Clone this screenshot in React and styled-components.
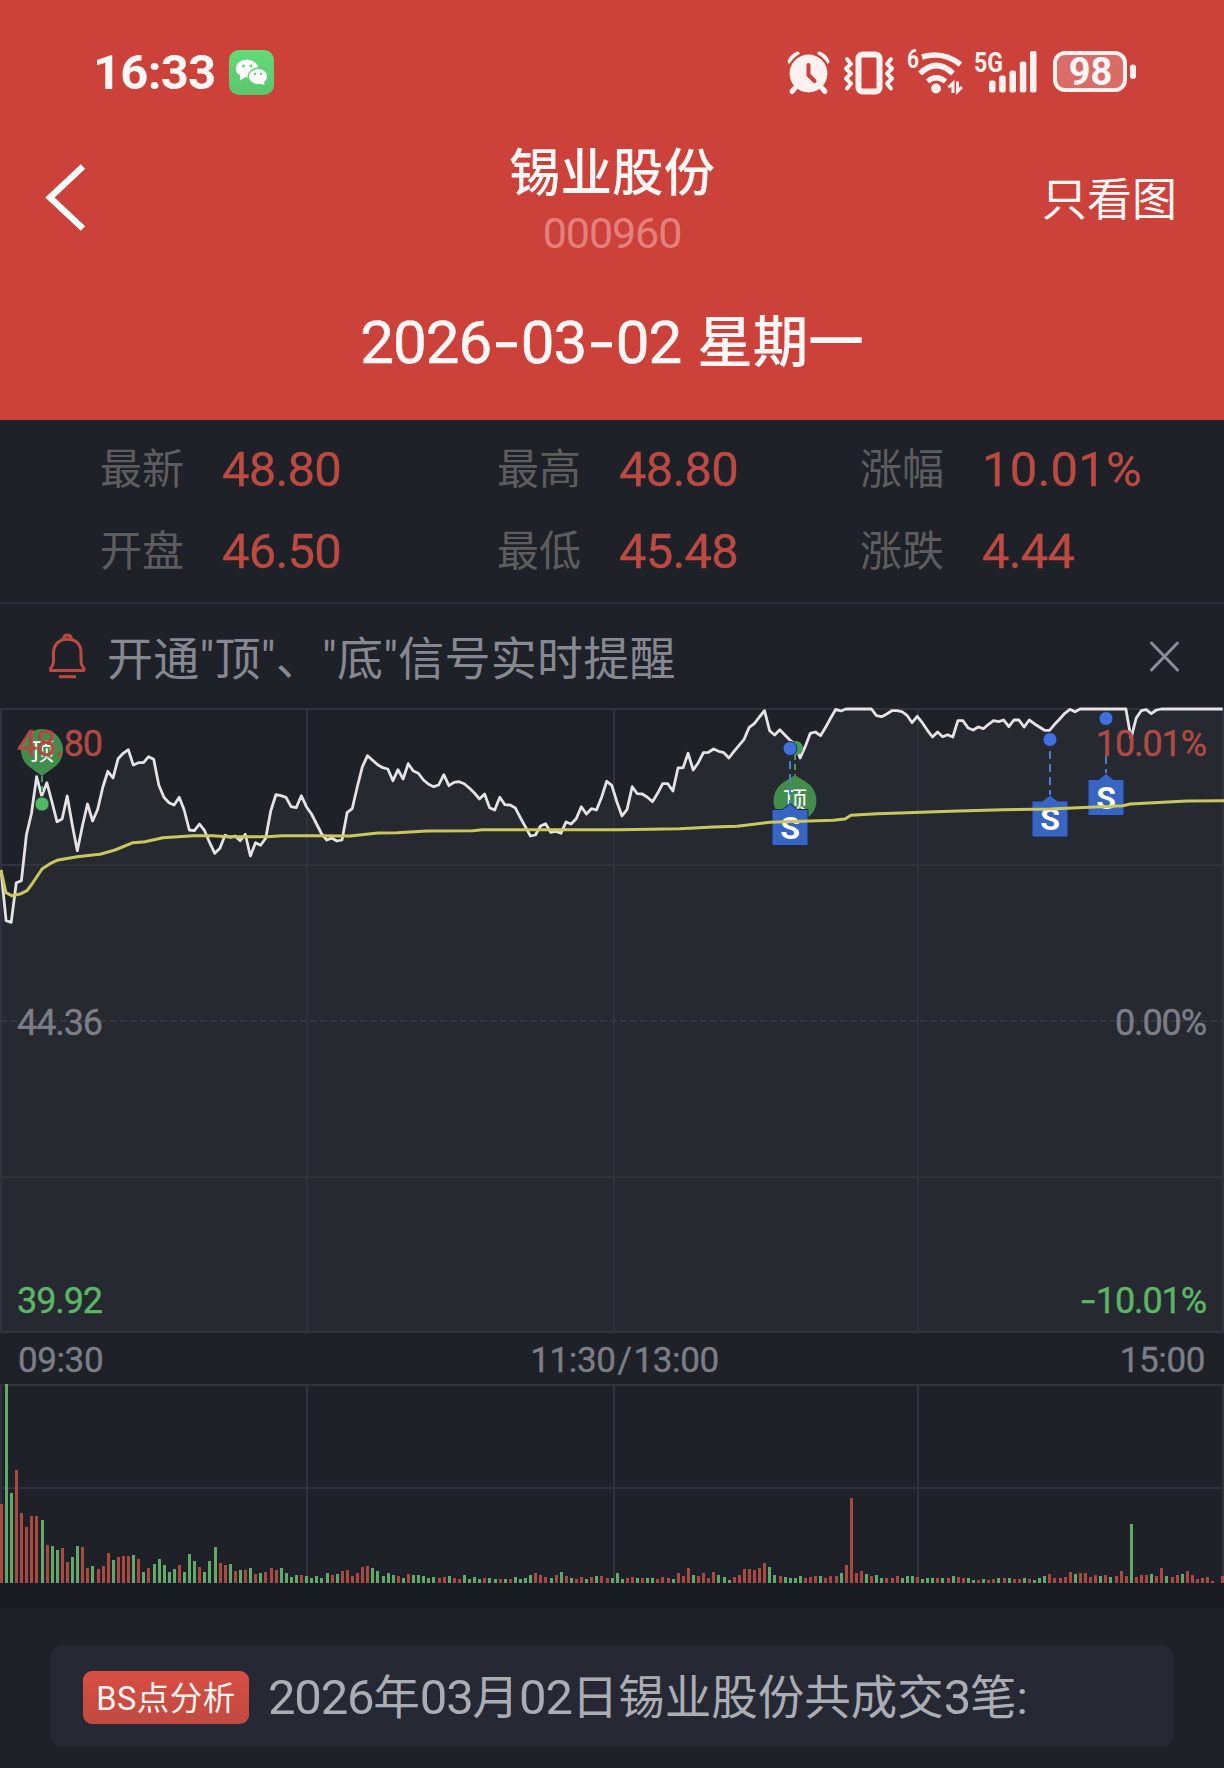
import React from 'react';
import styled, { createGlobalStyle } from 'styled-components';

const GlobalStyle = createGlobalStyle`
  * {
    box-sizing: border-box;
  }

  body {
    margin: 0;
    background: #1f2128;
    font-family: Roboto, "Noto Sans CJK SC", sans-serif;
  }

  svg {
    display: block;
    flex: none;
    overflow: visible;
  }
`;

const CHART_W = 1224;
const PRICE_H = 625;
const VOLUME_H = 199;
const STEP = 5.09;

const prices = [
  161, 211.7, 213.3, 173.7, 171.7, 126, 104.3, 67.7, 87, 73.7, 92.7, 112.7, 110, 87, 116,
  141.7, 117, 95, 112, 100.3, 78.3, 62.3, 69, 49.7, 44.3, 40.7, 56, 53.7, 53.7, 47.7,
  50.3, 76, 88.3, 93.7, 96, 88.3, 101, 121, 121.7, 115, 121.7, 133.7, 144.3, 139.3, 126.3,
  128.3, 127, 131.7, 125.3, 147, 133.7, 136.3, 129.3, 101.7, 85.7, 86.7, 88.3, 97.7, 98.7, 86.7,
  97.7, 105, 115, 125, 131, 129, 132, 131, 103.7, 99.7, 77.7, 57.7, 46.7, 51.3, 55.7,
  58.7, 60, 71.7, 60.7, 70, 54.7, 62, 64.3, 71, 75.3, 77.7, 76, 65.7, 76.7, 73.3,
  72.7, 74.7, 79, 84, 90, 85, 98.7, 101, 88.3, 95.7, 96, 98.7, 108.3, 117.7, 127,
  126, 117, 114.7, 123.3, 122.3, 124.3, 113, 115, 109.7, 97.7, 105, 99.7, 101, 88.3, 72.3,
  76.3, 93, 107, 100.3, 77.7, 84.7, 85, 88.3, 92.7, 84.3, 74.7, 74.7, 82, 59, 58.7,
  44.3, 61, 53.7, 43.7, 43.3, 40, 42.3, 43.7, 49, 42.3, 36.3, 30.3, 18.3, 14.7, 8,
  1.7, 21.7, 26, 20.7, 26, 31, 35, 49, 37.7, 24.3, 23, 26.7, 18.3, 9, 0.3,
  2, 0, 0, 0, 0, 0, 0, 6.7, 7.7, 5, 1.7, 1.7, 2.7, 6.3, 13.7,
  7.3, 13.7, 21.3, 28, 23, 27.7, 25.7, 28, 11.7, 11.7, 19, 21, 18, 19.7, 15.3,
  11.7, 12.7, 11, 17.7, 11, 11, 18, 11, 14.7, 18, 21.3, 21.3, 15.3, 10, 4.3,
  0.3, 2.7, 0, 0, 0, 0, 0, 0, 0, 0, 0, 0, 29.3, 9.3, 1.7,
  0.7, 4.7, 1, 0, 0, 0, 0, 0, 0, 0, 0, 0, 0, 0, 0, 0,
];

const average = [
  [1, 161], [6, 183.7], [11.7, 186.7], [21, 184.7], [27, 181.7], [32, 175], [42, 160],
  [50, 154.7], [57, 151.3], [77, 147.7], [100, 145.3], [115, 141], [133, 133.7], [145, 132.7],
  [163, 128.7], [193, 126.7], [213, 126.7], [227, 127.7], [267, 127.7], [282, 126.7],
  [310, 126.7], [350, 127], [378, 124], [397, 123.7], [427, 122], [473, 121.7], [482, 120.7],
  [620, 120.7], [680, 119.7], [713, 118], [737, 117.3], [770, 113.3], [833, 111.3],
  [845, 110], [851, 106.3], [877, 104.7], [900, 104], [950, 102.3], [1003, 100.7],
  [1050, 100], [1123, 96.7], [1130, 95], [1187, 92], [1224, 91.7],
];

// r = up minute, g = down minute, number = bar height
const volumes = `
  r79 g199 g90 r113 r70 r56 r67 r67 g63 r38 g37 g33 r35 r21 g26 g37 r36 r15 g17 r14
  r17 r30 g23 r26 r27 r27 g28 r24 g11 r15 g19 g24 g18 g11 g14 r18 g11 g29 g22 r16
  g11 g22 g36 r20 r18 g19 r12 g13 r13 g15 r9 g10 r11 r15 r13 g15 g10 g6 g8 r8
  g7 g5 g7 g5 g10 r8 g9 r12 r13 r7 r10 r16 r17 g15 g12 g7 g10 g8 r7 g5
  r9 g8 g8 g7 g5 g6 r5 r6 g7 r5 r4 g8 g4 g6 g4 r5 g5 g4 r4 g4
  r4 g6 g4 g5 g8 r10 r8 r6 g5 r8 g11 r7 g5 r4 r6 g4 r6 g7 r7 r5
  g5 g10 g4 r5 r6 g5 r5 g5 g5 r4 r6 r5 g4 r10 r7 r15 g8 r7 r10 r5
  r11 g8 g6 g3 r6 r8 r14 r14 r13 r15 r20 g16 g8 r7 g6 g5 g5 g7 r5 r6
  r7 g7 r5 r7 r7 g10 r18 r85 r10 r12 g9 r7 g8 g5 r5 r5 r7 g5 g7 g7
  r6 g4 g5 g5 r5 g5 r5 g7 r6 r5 g5 g3 r3 g4 r3 r4 g5 r5 g5 r4
  r4 g5 r4 g3 g5 g7 r9 r5 r5 r6 r11 g9 r10 r10 r6 r8 g7 r8 g6 r7
  r12 r7 g59 r6 r8 r8 g9 r7 r15 g7 r6 r8 g9 r12 r8 r4 r5 r6 r2 r0 r7
`.trim().split(/\s+/).map((v) => ({ up: v[0] === 'r', h: Number(v.slice(1)) }));

const stats = [
  [{ label: '最新', value: '48.80' }, { label: '开盘', value: '46.50' }],
  [{ label: '最高', value: '48.80' }, { label: '最低', value: '45.48' }],
  [{ label: '涨幅', value: '10.01%', wide: true }, { label: '涨跌', value: '4.44' }],
];

const Screen = styled.div`
  width: 1224px;
  height: 1768px;
  overflow: hidden;
  display: flex;
  flex-direction: column;
  background: #1f2128;
`;

const Header = styled.header`
  height: 420px;
  flex: none;
  display: flex;
  flex-direction: column;
  background: #cc4139;
  color: #fff6f5;
`;

const StatusBar = styled.div`
  height: 96px;
  padding: 49px 88px 0 93px;
  display: flex;
  justify-content: space-between;
`;

const StatusGroup = styled.div`
  display: flex;
  align-items: center;
  height: 47px;
  gap: 14px;
`;

const Clock = styled.span`
  width: 122px;
  font-size: 49px;
  font-weight: 700;
  line-height: 47px;
  letter-spacing: -0.8px;
  white-space: nowrap;
`;

const NavBar = styled.div`
  height: 204px;
  padding: 6px 47px 0 47px;
  display: grid;
  grid-template-columns: 200px 1fr 200px;
  align-items: center;
`;

const BackButton = styled.div`
  margin: 0 0 8px -4px;
`;

const Title = styled.h1`
  margin: 0;
  font-size: 51.5px;
  font-weight: 500;
  line-height: 60px;
  text-align: center;
`;

const Code = styled.div`
  margin-top: 4px;
  font-size: 43px;
  line-height: 50px;
  letter-spacing: -1.1px;
  text-align: center;
  color: #e5817c;
`;

const ChartOnly = styled.div`
  font-size: 45px;
  line-height: 60px;
  text-align: right;
`;

const DateRow = styled.div`
  height: 84px;
  padding-top: 2px;
  display: flex;
  justify-content: center;
  align-items: center;
  gap: 16px;
`;

const DateDigits = styled.span`
  font-size: 60px;
  line-height: 84px;
  letter-spacing: -1px;
  -webkit-text-stroke: 0.6px currentColor;
`;

const Weekday = styled.span`
  padding-top: 2px;
  font-size: 55.5px;
  font-weight: 500;
  line-height: 84px;
`;

const Dash = styled.span`
  display: inline-block;
  margin: 0 ${(props) => props.$gap}px;
  transform: scaleX(1.4);
`;

const Stats = styled.section`
  height: 184px;
  flex: none;
  padding: 9px 0 0 100px;
  display: grid;
  grid-template-columns: 397px 363px 1fr;
  border-bottom: 2px solid #2b2e37;
`;

const StatRow = styled.div`
  height: 82px;
  display: flex;
  align-items: center;
  line-height: 70px;
`;

const StatLabel = styled.span`
  width: 122px;
  font-size: 42px;
  color: #5d5d5f;
`;

const StatValue = styled.span`
  font-size: 49px;
  letter-spacing: ${(props) => (props.$wide ? 0.2 : -0.8)}px;
  color: #bd4a42;
  -webkit-text-stroke: 0.3px currentColor;
`;

const Notice = styled.div`
  height: 104px;
  flex: none;
  padding: 0 44px 0 48px;
  display: flex;
  align-items: center;
`;

const NoticeText = styled.span`
  flex: 1;
  margin-left: 20px;
  padding-top: 6px;
  font-size: 46px;
  line-height: 60px;
  letter-spacing: 0.25px;
  color: #868892;
`;

const PriceChart = styled.section`
  position: relative;
  height: ${PRICE_H}px;
  flex: none;
`;

const Overlay = styled.div`
  position: absolute;
  inset: 0;
`;

const AxisLabels = styled(Overlay)`
  padding: 16px 18px 12px 17px;
  display: flex;
  flex-direction: column;
  justify-content: space-between;
`;

const AxisRow = styled.div`
  display: flex;
  justify-content: space-between;
  font-size: 36px;
  line-height: 40px;
  letter-spacing: -1.1px;
  color: ${(props) => props.$color};
  -webkit-text-stroke: 0.4px currentColor;
`;

const TimeAxis = styled.div`
  height: 51px;
  flex: none;
  padding: 3px 19px 0 18px;
  display: grid;
  grid-template-columns: 1fr auto 1fr;
  align-items: center;
  font-size: 35px;
  letter-spacing: -0.4px;
  color: #7c7e87;
  -webkit-text-stroke: 0.4px currentColor;

  span:nth-child(2) {
    margin-left: 26px;
  }

  span:last-child {
    text-align: right;
  }
`;

const Slash = styled.i`
  margin: 0 2px;
  font-style: normal;
`;

const VolumeChart = styled.section`
  height: ${VOLUME_H}px;
  flex: none;
`;

const Spacer = styled.div`
  height: 25px;
  flex: none;
  background: #191b23;
`;

const AnalysisCard = styled.section`
  height: 102px;
  margin: 37px 50px 0;
  padding: 2px 33px 0;
  display: flex;
  align-items: center;
  gap: 19px;
  border-radius: 13px;
  background: #262934;
`;

const Badge = styled.span`
  width: 166px;
  height: 53px;
  padding-top: 2px;
  border-radius: 9px;
  background: linear-gradient(180deg, #d94d43, #c04a41);
  color: #fff3f1;
  font-size: 32.5px;
  line-height: 53px;
  letter-spacing: 0.5px;
  text-align: center;
  white-space: nowrap;
`;

const AnalysisText = styled.span`
  padding-top: 2px;
  font-size: 46.5px;
  line-height: 60px;
  color: #abadb4;
  white-space: nowrap;
`;

const Num = styled.span`
  font-size: 49px;
  letter-spacing: -1.2px;
`;

const WeChatIcon = () => (
  <svg width="45" height="45" viewBox="0 0 45 45">
    <defs>
      <linearGradient id="wechat" x1="0" y1="0" x2="0" y2="1">
        <stop offset="0" stopColor="#64db78" />
        <stop offset="1" stopColor="#5bc56c" />
      </linearGradient>
    </defs>
    <rect width="45" height="45" rx="10" fill="url(#wechat)" />
    <g fill="#fff">
      <ellipse cx="18" cy="18.5" rx="11.2" ry="9" />
      <path d="M11 25v5.4l5.5-3.4z" />
      <ellipse cx="29" cy="26.5" rx="9.8" ry="8.2" stroke="#60cf72" strokeWidth="1.4" />
      <path d="M31 33.5l4.5 1.8-.6-4z" />
    </g>
    <g fill="#60cf72">
      <circle cx="14.5" cy="16" r="1.4" />
      <circle cx="22" cy="16" r="1.4" />
      <circle cx="26" cy="24" r="1.2" />
      <circle cx="32" cy="24" r="1.2" />
    </g>
  </svg>
);

const AlarmIcon = () => (
  <svg width="42" height="43" fill="none" stroke="#fff1f0" strokeLinecap="round">
    <circle cx="20.5" cy="22.5" r="19" fill="#fff1f0" stroke="none" />
    <path d="M1.8 10.5Q4 5 9.500 2.800M39.200 10.500Q37 5 31.500 2.800" strokeWidth="4.500" />
    <circle cx="20.500" cy="22.500" r="20.300" stroke="#cc4139" strokeWidth="1.800" />
    <path d="M7 37l-3 3.500M34 37l3 3.500" strokeWidth="5" />
    <path d="M20.500 14v10l6 6" stroke="#cc4139" strokeWidth="4" strokeLinejoin="round" />
  </svg>
);

const VibrateIcon = () => (
  <svg width="49" height="43" fill="none" stroke="#fff1f0" strokeLinecap="round" strokeLinejoin="round">
    <rect x="14.500" y="3.500" width="21" height="37" rx="4" strokeWidth="6" />
    <path d="M3 8l4 5-5 4.500 5 5-5 5 5 5-4 5" strokeWidth="4" />
    <path d="M47 8l-4 5 5 4.500-5 5 5 5-5 5 4 5" strokeWidth="4" />
  </svg>
);

const WifiIcon = () => (
  <svg width="53" height="46" fill="none" stroke="#fff1f0">
    <path d="M15 7Q36 .500 53.500 14.500" strokeWidth="5.500" />
    <path d="M13 23.500Q29.500 7.500 46 23.500" strokeWidth="5.500" />
    <path d="M20.500 31.500Q29.500 24 38.500 31.500" strokeWidth="5.500" />
    <circle cx="29" cy="38.500" r="4.900" fill="#fff1f0" stroke="none" />
    <path d="M46 43V33l-4.500 4.500M50.500 31.500v10l4.500-4.500" strokeWidth="3" />
    <text x="0" y="18" fontSize="25" fontWeight="700" fill="#fff1f0" stroke="none" textLength="12" lengthAdjust="spacingAndGlyphs">6</text>
  </svg>
);

const SignalIcon = () => (
  <svg width="65" height="43" fill="#fff1f0">
    <text x="0" y="21" fontSize="28.500" fontWeight="700" textLength="29" lengthAdjust="spacingAndGlyphs">5G</text>
    <rect x="15" y="29.500" width="6.500" height="12" rx="2" />
    <rect x="25.200" y="24.500" width="6.500" height="17" rx="2" />
    <rect x="35.500" y="19.500" width="6.500" height="22" rx="2" />
    <rect x="45.800" y="10.500" width="6.500" height="31" rx="2" />
    <rect x="56" y="0" width="6.500" height="41.500" rx="2" />
  </svg>
);

const BatteryIcon = () => (
  <svg width="83" height="43">
    <rect x="2" y="2" width="70" height="37" rx="10" fill="#da6c67" stroke="#fff1f0" strokeWidth="4" />
    <rect x="77" y="13.500" width="6" height="14.500" rx="3" fill="#fff1f0" />
    <text x="37.500" y="34" fontSize="38" fontWeight="700" fill="#fff6f5" textAnchor="middle">98</text>
  </svg>
);

const BackIcon = () => (
  <svg width="44" height="68" fill="none" stroke="#fff" strokeWidth="6.500">
    <path d="M40 3.500L7 34.500l33 31" />
  </svg>
);

const BellIcon = () => (
  <svg width="39" height="46" fill="none" stroke="#bd4a42" strokeWidth="3" strokeLinejoin="round">
    <path d="M2.500 37.500q-.500-2 1-3.500 2-2 2-6V19Q6.500 7 19.500 6 32.500 7 33 19v9q0 4 2 6 1.500 1.500 1 3.500z" />
    <path d="M15.500 6q.500-4 4-4t4 4" />
    <path d="M11 43.700h17" />
  </svg>
);

const CloseIcon = () => (
  <svg width="30" height="31" stroke="#8d8f98" strokeWidth="3" strokeLinecap="round">
    <path d="M1.500 2l26 27M27.500 2L1.500 29" />
  </svg>
);

const Grid = ({ height, rows }) => (
  <g fill="#30333d">
    {[0, 306, 613, 917, 1222].map((x) => (
      <rect key={x} x={x} y="0" width="2" height={height} />
    ))}
    {rows.map((y) => (
      <rect key={y} x="0" y={y} width={CHART_W} height="2" />
    ))}
  </g>
);

const SellFlag = ({ x, top, dot, from }) => (
  <g>
    <path d={`M${x} ${from}V${top}`} stroke="#4a80cf" strokeWidth="2" strokeDasharray="8 5" />
    <circle cx={x} cy={dot} r="7" fill="#4170dd" stroke="#1c2b50" strokeWidth="1" />
    <path
      d={`M${x - 18} ${top + 6}h10.500l7.500-6 7.500 6h10.500v36h-36z`}
      fill="#3864c2"
      stroke="#1b2950"
      strokeWidth="1"
    />
    <text x={x} y={top + 35} fontSize="32" fontWeight="700" fill="#fff" textAnchor="middle">S</text>
  </g>
);

const priceLine = prices.map((y, i) => `${(1 + i * STEP).toFixed(1)},${y + 1}`).join(' ');

const PriceCanvas = () => (
  <svg width={CHART_W} height={PRICE_H}>
    <polygon points={`1,${PRICE_H} ${priceLine} ${CHART_W},${PRICE_H}`} fill="#262930" />
    <Grid height={PRICE_H} rows={[0, 156, 468, 623]} />
    <path d="M0 313H1224" stroke="#353841" strokeWidth="2" strokeDasharray="7 3" />
    <polyline points={priceLine} fill="none" stroke="#e6e3e6" strokeWidth="2.800" strokeLinejoin="round" />
    <path d="M42 68v21" stroke="#499a56" strokeWidth="2" strokeDasharray="6 4" />
    <circle cx="42" cy="96" r="7" fill="#54b667" stroke="#24492f" strokeWidth="1" />
    <path d="M42 68l-11-8A21 21 0 1 1 53 60z" fill="#428d4c" />
    <text x="42" y="52" fontSize="24" fill="#fff" textAnchor="middle">顶</text>
    <path d="M795 46v21" stroke="#499a56" strokeWidth="2" strokeDasharray="6 4" />
    <circle cx="796" cy="40" r="7" fill="#499a56" />
    <path d="M795 67l-11 7A21.500 21.500 0 1 0 806 74z" fill="#428d4c" />
    <text x="795" y="101" fontSize="24" fill="#fff" textAnchor="middle">顶</text>
    <SellFlag x={790} top={95.5} dot={40.5} from={53} />
    <SellFlag x={1050} top={87} dot={31.5} from={43} />
    <SellFlag x={1106} top={65.5} dot={10.5} from={48} />
  </svg>
);

const VolumeCanvas = () => (
  <svg width={CHART_W} height={VOLUME_H}>
    <Grid height={VOLUME_H} rows={[0, 103]} />
    {volumes.map((bar, i) => (
      <rect
        key={i}
        x={Math.round(i * STEP - 0.2)}
        y={VOLUME_H - bar.h}
        width="3"
        height={bar.h}
        fill={bar.up ? '#a94942' : '#60a968'}
      />
    ))}
  </svg>
);

const App = () => {
  return (
    <Screen>
      <GlobalStyle />
      <Header>
        <StatusBar>
          <StatusGroup>
            <Clock>16:33</Clock>
            <WeChatIcon />
          </StatusGroup>
          <StatusGroup>
            <AlarmIcon />
            <VibrateIcon />
            <WifiIcon />
            <SignalIcon />
            <BatteryIcon />
          </StatusGroup>
        </StatusBar>
        <NavBar>
          <BackButton>
            <BackIcon />
          </BackButton>
          <div>
            <Title>锡业股份</Title>
            <Code>000960</Code>
          </div>
          <ChartOnly>只看图</ChartOnly>
        </NavBar>
        <DateRow>
          <DateDigits>
            2026<Dash $gap={7}>-</Dash>03<Dash $gap={7}>-</Dash>02
          </DateDigits>
          <Weekday>星期一</Weekday>
        </DateRow>
      </Header>
      <Stats>
        {stats.map((column) => (
          <div key={column[0].label}>
            {column.map((item) => (
              <StatRow key={item.label}>
                <StatLabel>{item.label}</StatLabel>
                <StatValue $wide={item.wide}>{item.value}</StatValue>
              </StatRow>
            ))}
          </div>
        ))}
      </Stats>
      <Notice>
        <BellIcon />
        <NoticeText>开通"顶"、"底"信号实时提醒</NoticeText>
        <CloseIcon />
      </Notice>
      <PriceChart>
        <PriceCanvas />
        <AxisLabels>
          <AxisRow $color="#b14a44">
            <span>48.80</span>
            <span>10.01%</span>
          </AxisRow>
          <AxisRow $color="#7c7e87">
            <span>44.36</span>
            <span>0.00%</span>
          </AxisRow>
          <AxisRow $color="#5cb566">
            <span>39.92</span>
            <span>
              <Dash $gap={4}>-</Dash>10.01%
            </span>
          </AxisRow>
        </AxisLabels>
        <Overlay>
          <svg width={CHART_W} height={PRICE_H}>
            <polyline
              points={average.map(([x, y]) => `${x},${y + 1}`).join(' ')}
              fill="none"
              stroke="#cbc75f"
              strokeWidth="3"
              strokeLinejoin="round"
            />
          </svg>
        </Overlay>
      </PriceChart>
      <TimeAxis>
        <span>09:30</span>
        <span>
          11:30<Slash>/</Slash>13:00
        </span>
        <span>15:00</span>
      </TimeAxis>
      <VolumeChart>
        <VolumeCanvas />
      </VolumeChart>
      <Spacer />
      <AnalysisCard>
        <Badge>BS点分析</Badge>
        <AnalysisText>
          <Num>2026</Num>年<Num>03</Num>月<Num>02</Num>日锡业股份共成交<Num>3</Num>笔:
        </AnalysisText>
      </AnalysisCard>
    </Screen>
  );
};

export default App;
